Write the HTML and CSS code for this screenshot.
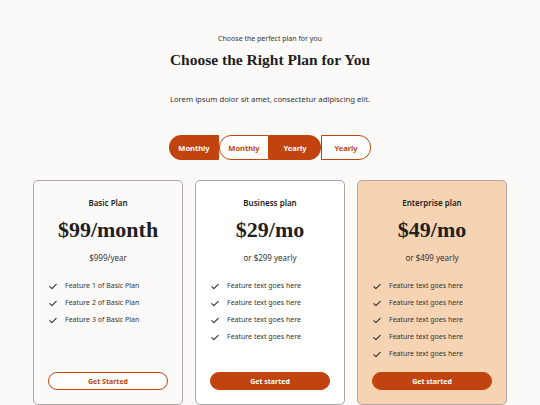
FILE: index.html
```html
<!DOCTYPE html>
<html>
<head>
<meta charset="utf-8">
<link rel="stylesheet" href="styles.css">
</head>
<body>
<main class="page">
  <header class="intro">
    <p class="eyebrow">Choose the perfect plan for you</p>
    <h1 class="title">Choose the Right Plan for You</h1>
    <p class="lead">Lorem ipsum dolor sit amet, consectetur adipiscing elit.</p>
  </header>

  <div class="toggle">
    <button class="tbtn filled left">Monthly</button>
    <button class="tbtn outline left">Monthly</button>
    <button class="tbtn filled right">Yearly</button>
    <button class="tbtn outline right">Yearly</button>
  </div>

  <section class="cards">
    <article class="card basic">
      <h2 class="plan">Basic Plan</h2>
      <div class="price">$99/month</div>
      <div class="sub">$999/year</div>
      <ul class="features">
        <li><svg class="check" viewBox="0 0 10 8"><path d="M1 4.2 L3.6 6.6 L9 1.2"/></svg>Feature 1 of Basic Plan</li>
        <li><svg class="check" viewBox="0 0 10 8"><path d="M1 4.2 L3.6 6.6 L9 1.2"/></svg>Feature 2 of Basic Plan</li>
        <li><svg class="check" viewBox="0 0 10 8"><path d="M1 4.2 L3.6 6.6 L9 1.2"/></svg>Feature 3 of Basic Plan</li>
      </ul>
      <button class="cta ghost">Get Started</button>
    </article>

    <article class="card business">
      <h2 class="plan">Business plan</h2>
      <div class="price">$29/mo</div>
      <div class="sub">or $299 yearly</div>
      <ul class="features">
        <li><svg class="check" viewBox="0 0 10 8"><path d="M1 4.2 L3.6 6.6 L9 1.2"/></svg>Feature text goes here</li>
        <li><svg class="check" viewBox="0 0 10 8"><path d="M1 4.2 L3.6 6.6 L9 1.2"/></svg>Feature text goes here</li>
        <li><svg class="check" viewBox="0 0 10 8"><path d="M1 4.2 L3.6 6.6 L9 1.2"/></svg>Feature text goes here</li>
        <li><svg class="check" viewBox="0 0 10 8"><path d="M1 4.2 L3.6 6.6 L9 1.2"/></svg>Feature text goes here</li>
      </ul>
      <button class="cta solid">Get started</button>
    </article>

    <article class="card enterprise">
      <h2 class="plan">Enterprise plan</h2>
      <div class="price">$49/mo</div>
      <div class="sub">or $499 yearly</div>
      <ul class="features">
        <li><svg class="check" viewBox="0 0 10 8"><path d="M1 4.2 L3.6 6.6 L9 1.2"/></svg>Feature text goes here</li>
        <li><svg class="check" viewBox="0 0 10 8"><path d="M1 4.2 L3.6 6.6 L9 1.2"/></svg>Feature text goes here</li>
        <li><svg class="check" viewBox="0 0 10 8"><path d="M1 4.2 L3.6 6.6 L9 1.2"/></svg>Feature text goes here</li>
        <li><svg class="check" viewBox="0 0 10 8"><path d="M1 4.2 L3.6 6.6 L9 1.2"/></svg>Feature text goes here</li>
        <li><svg class="check" viewBox="0 0 10 8"><path d="M1 4.2 L3.6 6.6 L9 1.2"/></svg>Feature text goes here</li>
      </ul>
      <button class="cta solid">Get started</button>
    </article>
  </section>
</main>
</body>
</html>
```

FILE: styles.css
```css
* { box-sizing: border-box; }
html, body { margin: 0; padding: 0; }
body {
  background: #fcfaf9;
  font-family: "Noto Sans", "Open Sans", sans-serif;
  color: #2b2b2b;
  width: 540px;
  height: 405px;
  overflow: hidden;
}
.page {
  display: flex;
  flex-direction: column;
  align-items: center;
  padding-top: 34px;
}
.intro { text-align: center; }
.eyebrow {
  margin: 0;
  font-size: 7px;
  line-height: 10px;
  color: #333;
}
.title {
  margin: 6px 0 0;
  font-family: "Liberation Serif", serif;
  font-weight: 700;
  font-size: 15.5px;
  line-height: 20px;
  color: #1f1f1f;
}
.lead {
  margin: 23px 0 0;
  font-size: 7.7px;
  line-height: 12px;
  color: #333;
}
.toggle {
  display: flex;
  margin-top: 30px;
}
.tbtn {
  height: 25px;
  width: 50px;
  padding: 0;
  font-family: "Noto Sans", sans-serif;
  font-weight: 700;
  font-size: 7.5px;
  border: 1px solid #c1440e;
  cursor: pointer;
}
.tbtn.filled { background: #c1440e; color: #fff; }
.tbtn.outline { background: #fff; color: #c1440e; }
.tbtn.left { border-radius: 12px 0 0 12px; }
.tbtn.right { border-radius: 0 12px 12px 0; }
.tbtn.filled.right { width: 52px; }
.cards {
  display: flex;
  gap: 12px;
  margin-top: 20px;
}
.card {
  width: 150px;
  border: 1px solid #a9a6a4;
  border-radius: 5px;
  padding: 16px 14px 14px;
  display: flex;
  flex-direction: column;
  align-items: center;
}
.card.basic { background: #fcfaf9; }
.card.business { background: #ffffff; }
.card.enterprise { background: #f6d3b3; }
.plan {
  margin: 0;
  font-size: 8px;
  line-height: 12px;
  font-weight: 600;
  color: #222;
}
.price {
  margin-top: 7px;
  font-family: "Liberation Serif", serif;
  font-weight: 700;
  font-size: 22px;
  line-height: 28px;
  color: #1f1f1f;
}
.sub {
  margin-top: 8px;
  font-size: 8px;
  line-height: 12px;
  color: #333;
}
.features {
  list-style: none;
  margin: 16px 0 0;
  padding: 0 0 0 1px;
  align-self: stretch;
  display: flex;
  flex-direction: column;
  gap: 5px;
}
.features li {
  display: flex;
  align-items: center;
  gap: 8px;
  font-size: 7px;
  line-height: 12px;
  color: #333;
}
.check {
  width: 8px;
  height: 7px;
  flex: none;
}
.check path {
  fill: none;
  stroke: #2a2a2a;
  stroke-width: 1.3;
  stroke-linecap: round;
  stroke-linejoin: round;
}
.cta {
  margin-top: auto;
  align-self: stretch;
  height: 18px;
  border-radius: 9px;
  font-family: "Noto Sans", sans-serif;
  font-weight: 700;
  font-size: 7px;
  padding: 0;
  cursor: pointer;
}
.card.enterprise .cta { margin-top: 12px; }
.cta.ghost {
  background: #fff;
  color: #c1440e;
  border: 1px solid #c1440e;
}
.cta.solid {
  background: #c1440e;
  color: #fff;
  border: 1px solid #c1440e;
}
```
